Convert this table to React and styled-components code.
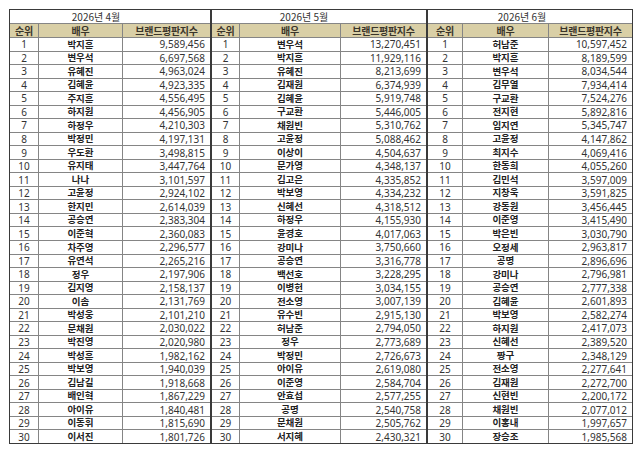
import styled, { createGlobalStyle } from 'styled-components';

const GlobalStyle = createGlobalStyle`
    html, body {
        margin: 0;
        padding: 0;
        background: #ffffff;
    }
`;

const april = [
    ['박지훈', '9,589,456'], ['변우석', '6,697,568'], ['유혜진', '4,963,024'], ['김혜윤', '4,923,335'],
    ['주지훈', '4,556,495'], ['하지원', '4,456,905'], ['하정우', '4,210,303'], ['박정민', '4,197,131'],
    ['우도환', '3,498,815'], ['유지태', '3,447,764'], ['나나', '3,101,597'], ['고윤정', '2,924,102'],
    ['한지민', '2,614,039'], ['공승연', '2,383,304'], ['이준혁', '2,360,083'], ['차주영', '2,296,577'],
    ['유연석', '2,265,216'], ['정우', '2,197,906'], ['김지영', '2,158,137'], ['이솜', '2,131,769'],
    ['박성웅', '2,101,210'], ['문채원', '2,030,022'], ['박진영', '2,020,980'], ['박성훈', '1,982,162'],
    ['박보영', '1,940,039'], ['김남길', '1,918,668'], ['배인혁', '1,867,229'], ['아이유', '1,840,481'],
    ['이동휘', '1,815,690'], ['이서진', '1,801,726']
];

const may = [
    ['변우석', '13,270,451'], ['박지훈', '11,929,116'], ['유혜진', '8,213,699'], ['김재원', '6,374,939'],
    ['김혜윤', '5,919,748'], ['구교환', '5,446,005'], ['채원빈', '5,310,762'], ['고윤정', '5,088,462'],
    ['이상이', '4,504,637'], ['문가영', '4,348,137'], ['김고은', '4,335,852'], ['박보영', '4,334,232'],
    ['신혜선', '4,318,512'], ['하정우', '4,155,930'], ['윤경호', '4,017,063'], ['강미나', '3,750,660'],
    ['공승연', '3,316,778'], ['백선호', '3,228,295'], ['이병헌', '3,034,155'], ['전소영', '3,007,139'],
    ['유수빈', '2,915,130'], ['허남준', '2,794,050'], ['정우', '2,773,689'], ['박정민', '2,726,673'],
    ['아이유', '2,619,080'], ['이준영', '2,584,704'], ['안효섭', '2,577,255'], ['공명', '2,540,758'],
    ['문채원', '2,505,762'], ['서지혜', '2,430,321']
];

const june = [
    ['허남준', '10,597,452'], ['박지훈', '8,189,599'], ['변우석', '8,034,544'], ['김무열', '7,934,414'],
    ['구교환', '7,524,276'], ['전지현', '5,892,816'], ['임지연', '5,345,747'], ['고윤정', '4,147,862'],
    ['최지수', '4,069,416'], ['한동희', '4,055,260'], ['김민석', '3,597,009'], ['지창욱', '3,591,825'],
    ['강동원', '3,456,445'], ['이준영', '3,415,490'], ['박은빈', '3,030,790'], ['오정세', '2,963,817'],
    ['공명', '2,896,696'], ['강미나', '2,796,981'], ['공승연', '2,777,338'], ['김혜윤', '2,601,893'],
    ['박보영', '2,582,274'], ['하지원', '2,417,073'], ['신혜선', '2,389,520'], ['짱구', '2,348,129'],
    ['전소영', '2,277,641'], ['김재원', '2,272,700'], ['신현빈', '2,200,172'], ['채원빈', '2,077,012'],
    ['이홍내', '1,997,657'], ['장승조', '1,985,568']
];

const months = [
    { title: '2026년 4월', cols: '28px 83px 87px', shift: 28, rows: april },
    { title: '2026년 5월', cols: '27px 100px 85px', shift: 30, rows: may },
    { title: '2026년 6월', cols: '34px 85px 83px', shift: 16, rows: june }
];

function RankTable ({ title, cols, shift, rows }) {
    return (
        <Table $cols={cols}>
            <TitleCell $shift={shift}>{title}</TitleCell>
            <HeadCell>순위</HeadCell>
            <HeadCell>배우</HeadCell>
            <HeadCell>브랜드평판지수</HeadCell>
            {rows.map(([name, score], i) => (
                <Row key={name + i}>
                    <RankCell>{i + 1}</RankCell>
                    <NameCell>{name}</NameCell>
                    <ScoreCell>{score}</ScoreCell>
                </Row>
            ))}
        </Table>
    );
}

export default function App () {
    return (
        <>
            <GlobalStyle />
            <Page>
                {months.map(m => <RankTable key={m.title} {...m} />)}
            </Page>
        </>
    );
}

const Page = styled.div`
    width: 640px;
    height: 452px;
    box-sizing: border-box;
    padding: 9px 0 0 9px;
    display: flex;
    align-items: flex-start;
    background: #ffffff;
`;

const Table = styled.div`
    display: grid;
    grid-template-columns: ${p => p.$cols};
    grid-template-rows: 13px 13px repeat(30, 1fr);
    gap: 1px;
    height: 435px;
    box-sizing: border-box;
    border: 1px solid #3a3a3a;
    background: #858585;
`;

const Row = styled.div`
    display: contents;
`;

const Cell = styled.div`
    display: flex;
    align-items: center;
    justify-content: center;
    background: #ffffff;
    color: #1e1e1e;
    font-size: 10px;
    line-height: 1;
    white-space: nowrap;
    overflow: hidden;
`;

const TitleCell = styled(Cell)`
    grid-column: 1 / -1;
    padding-right: ${p => p.$shift}px;
    font-family: "Noto Sans CJK KR", "Noto Sans", sans-serif;
    color: #333333;
`;

const HeadCell = styled(Cell)`
    background: #d9cfa6;
    font-family: "Noto Sans CJK KR", sans-serif;
    font-weight: 700;
    color: #3a352a;
    letter-spacing: -0.3px;
`;

const RankCell = styled(Cell)`
    font-family: "Noto Sans", "Open Sans", sans-serif;
    color: #333333;
`;

const NameCell = styled(Cell)`
    font-family: "Noto Sans CJK KR", sans-serif;
    font-weight: 700;
    font-size: 9.5px;
    color: #222222;
`;

const ScoreCell = styled(Cell)`
    justify-content: flex-end;
    padding-right: 5px;
    font-family: "Noto Sans", "Open Sans", sans-serif;
    color: #333333;
`;
